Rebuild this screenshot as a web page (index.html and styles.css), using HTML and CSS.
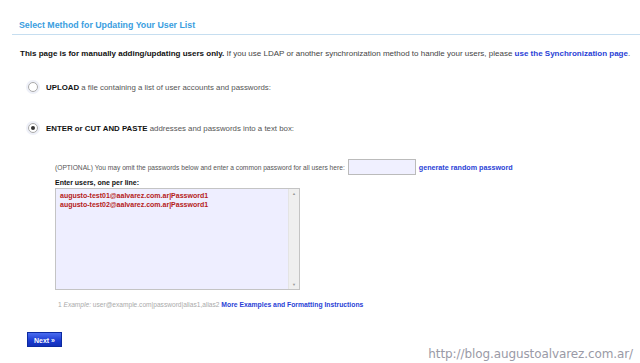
FILE: index.html
```html
<!DOCTYPE html>
<html>
<head>
<meta charset="utf-8">
<link rel="stylesheet" href="styles.css">
</head>
<body>
<div class="page">
  <h1 class="title">Select Method for Updating Your User List</h1>
  <p class="intro"><b>This page is for manually adding/updating users only.</b> If you use LDAP or another synchronization method to handle your users, please <a class="link">use the Synchronization page</a>.</p>

  <div class="option">
    <span class="radio"></span>
    <span class="opt-text"><b>UPLOAD</b> a file containing a list of user accounts and passwords:</span>
  </div>

  <div class="option option2">
    <span class="radio checked"></span>
    <span class="opt-text"><b>ENTER or CUT AND PASTE</b> addresses and passwords into a text box:</span>
  </div>

  <div class="entry">
    <div class="optional">
      <span>(OPTIONAL) You may omit the passwords below and enter a common password for all users here:</span>
      <span class="pwbox"></span>
      <a class="link">generate random password</a>
    </div>
    <div class="label">Enter users, one per line:</div>
    <div class="textarea">
      <div class="lines">augusto-test01@aalvarez.com.ar|Password1<br>augusto-test02@aalvarez.com.ar|Password1</div>
      <div class="scroll"><span class="arrow">&#9650;</span><span class="arrow">&#9660;</span></div>
    </div>
    <div class="foot"><span class="gray">1 <i>Example:</i> user@example.com|password|alias1,alias2</span> <a class="link">More Examples and Formatting Instructions</a></div>
  </div>

  <div class="btnrow"><span class="next">Next &raquo;</span></div>
  <div class="watermark">http://blog.augustoalvarez.com.ar/</div>
</div>
</body>
</html>
```
FILE: styles.css
```css
html, body { margin: 0; padding: 0; background: #fff; }
body { width: 640px; height: 363px; overflow: hidden; font-family: "Liberation Sans", Arial, sans-serif; }
.page { position: relative; height: 363px; }
.title {
  margin: 0 0 0 12px;
  padding: 20px 0 3px 7px;
  font-size: 8.8px;
  font-weight: bold;
  color: #3a9ee0;
  border-bottom: 1px solid #c6def0;
  line-height: 11px;
}
.intro {
  margin: 14px 0 0 20px;
  font-size: 8px;
  line-height: 10px;
  color: #444;
  white-space: nowrap;
}
.intro b { color: #111; }
.link { color: #2a3fd6; font-weight: bold; text-decoration: none; }
.option {
  display: flex;
  align-items: center;
  margin: 22px 0 0 27px;
  height: 12px;
}
.option2 { margin-top: 29px; }
.radio {
  width: 8px; height: 8px;
  border-radius: 50%;
  border: 1px solid #aaa;
  background: #fff;
  box-shadow: 0 0 0 2px #eef0f8;
  position: relative;
  margin-left: 1px;
}
.radio.checked::after {
  content: "";
  position: absolute;
  left: 2px; top: 2px;
  width: 4px; height: 4px;
  border-radius: 50%;
  background: #333;
}
.opt-text {
  margin-left: 8px;
  font-size: 7.85px;
  color: #555;
}
.opt-text b { color: #111; }
.entry { margin: 25px 0 0 55px; }
.optional {
  display: flex;
  align-items: center;
  font-size: 6.65px;
  color: #555;
  height: 16px;
}
.pwbox {
  width: 66px; height: 14px;
  border: 1px solid #bbb;
  background: #f0f0ff;
  margin: 0 3px 0 3px;
}
.optional .link { font-size: 7.2px; }
.label {
  margin-top: 3px;
  font-size: 7px;
  font-weight: bold;
  color: #111;
  line-height: 9px;
}
.textarea {
  display: flex;
  width: 243px;
  height: 100px;
  border: 1px solid #c4c4c4;
  background: #eeeeff;
  margin-top: 1px;
}
.lines {
  flex: 1;
  padding: 3px 0 0 4px;
  font-size: 7px;
  line-height: 8.5px;
  font-weight: bold;
  color: #b52020;
}
.scroll {
  width: 10px;
  background: #efefef;
  display: flex;
  flex-direction: column;
  justify-content: space-between;
  align-items: center;
  border-left: 1px solid #e4e4e4;
}
.arrow { font-size: 4px; color: #999; line-height: 9px; }
.foot {
  margin-top: 10px;
  font-size: 6.6px;
  line-height: 9px;
  white-space: nowrap;
}
.gray { color: #aaa; margin-left: 3px; }
.foot .link { font-size: 6.8px; }
.btnrow { margin: 20px 0 0 27px; }
.next {
  display: inline-block;
  width: 35px;
  height: 15px;
  line-height: 15px;
  text-align: center;
  font-size: 7px;
  font-weight: bold;
  color: #fff;
  background: linear-gradient(#4a6cf0, #1a3ad0 60%, #1230b8);
  border: 1px solid #0c2aa0;
  box-sizing: border-box;
}
.watermark {
  position: absolute;
  right: 7px;
  bottom: 2px;
  font-family: "DejaVu Sans", sans-serif;
  font-size: 12px;
  color: #9a9aa6;
  letter-spacing: -0.1px;
}
```
